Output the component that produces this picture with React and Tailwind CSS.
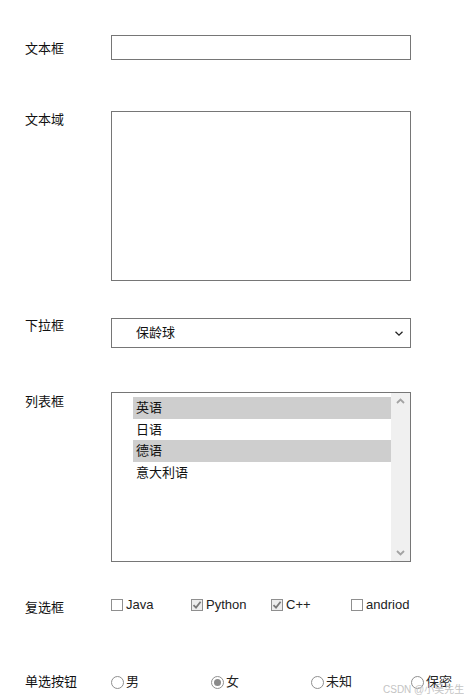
import React from "react";

const font = "font-['Liberation_Sans','Noto_Sans_CJK_SC',sans-serif]";

function Label({ children, cls = "" }) {
  return (
    <div className={`w-[86px] shrink-0 text-[13px] leading-[20px] text-[#111] ${cls}`}>{children}</div>
  );
}

function Checkbox({ checked, label }) {
  return (
    <div className="w-[80px] flex items-center">
      <span className={`w-[12px] h-[12px] border border-[#8f8f8f] flex items-center justify-center ${checked ? "bg-[#ededed]" : "bg-white"}`}>
        {checked && (
          <svg width="10" height="10" viewBox="0 0 10 10">
            <path d="M1.5 5.2 L4 7.6 L8.6 1.8" fill="none" stroke="#7a7a7a" strokeWidth="1.8" />
          </svg>
        )}
      </span>
      <span className="ml-[3px] text-[13px] leading-[16px] text-[#222]">{label}</span>
    </div>
  );
}

function Radio({ checked, label }) {
  return (
    <div className="w-[100px] flex items-center">
      <span className="w-[13px] h-[13px] rounded-full border border-[#8f8f8f] bg-white flex items-center justify-center">
        {checked && <span className="w-[7px] h-[7px] rounded-full bg-[#8a8a8a]" />}
      </span>
      <span className="ml-[2px] text-[13px] leading-[16px] text-[#222]">{label}</span>
    </div>
  );
}

export default function App() {
  const opts = [
    { t: "英语", s: true },
    { t: "日语", s: false },
    { t: "德语", s: true },
    { t: "意大利语", s: false },
  ];
  return (
    <div className={`relative w-[464px] h-[697px] overflow-hidden bg-white ${font}`}>
      <div className="pl-[25px] pt-[35px]">
        <div className="flex items-start">
          <Label cls="mt-[4px]">文本框</Label>
          <div className="w-[300px] h-[25px] border border-[#767676] bg-white" />
        </div>
        <div className="flex items-start mt-[51px]">
          <Label cls="-mt-px">文本域</Label>
          <div className="w-[300px] h-[170px] border border-[#767676] bg-white" />
        </div>
        <div className="flex items-start mt-[37px]">
          <Label cls="-mt-[2px]">下拉框</Label>
          <div className="w-[300px] h-[30px] border border-[#767676] bg-white flex items-center pl-[24px] pr-[6px]">
            <span className="flex-1 text-[13px] text-[#111]">保龄球</span>
            <svg width="10" height="7" viewBox="0 0 10 7">
              <path d="M1.5 1.8 L5 5.2 L8.5 1.8" fill="none" stroke="#222" strokeWidth="1.3" />
            </svg>
          </div>
        </div>
        <div className="flex items-start mt-[44px]">
          <Label>列表框</Label>
          <div className="w-[300px] h-[170px] border border-[#767676] bg-white flex">
            <div className="flex-1 pl-[21px] pt-[4px]">
              {opts.map((o) => (
                <div
                  key={o.t}
                  className={`h-[21.5px] leading-[21.5px] pl-[3px] text-[13px] text-[#111] ${o.s ? "bg-[#cecece]" : ""}`}
                >
                  {o.t}
                </div>
              ))}
            </div>
            <div className="w-[19px] bg-[#f0f0f0] flex flex-col justify-between items-center py-[5px]">
              <svg width="9" height="6" viewBox="0 0 9 6">
                <path d="M1 5 L4.5 1.5 L8 5" fill="none" stroke="#a3a3a3" strokeWidth="1.8" />
              </svg>
              <svg width="9" height="6" viewBox="0 0 9 6">
                <path d="M1 1 L4.5 4.5 L8 1" fill="none" stroke="#a3a3a3" strokeWidth="1.8" />
              </svg>
            </div>
          </div>
        </div>
        <div className="flex items-start mt-[36px]">
          <Label>复选框</Label>
          <div className="flex h-[12px] items-center mt-px">
            <Checkbox label="Java" />
            <Checkbox checked label="Python" />
            <Checkbox checked label="C++" />
            <Checkbox label="andriod" />
          </div>
        </div>
        <div className="flex items-center mt-[54px]">
          <Label>单选按钮</Label>
          <div className="flex">
            <Radio label="男" />
            <Radio checked label="女" />
            <Radio label="未知" />
            <Radio label="保密" />
          </div>
        </div>
      </div>
      <div className="absolute left-[383px] top-[684px] text-[10px] leading-[12px] text-[#c4c4c4] whitespace-nowrap">
        CSDN @小吴先生
      </div>
    </div>
  );
}
